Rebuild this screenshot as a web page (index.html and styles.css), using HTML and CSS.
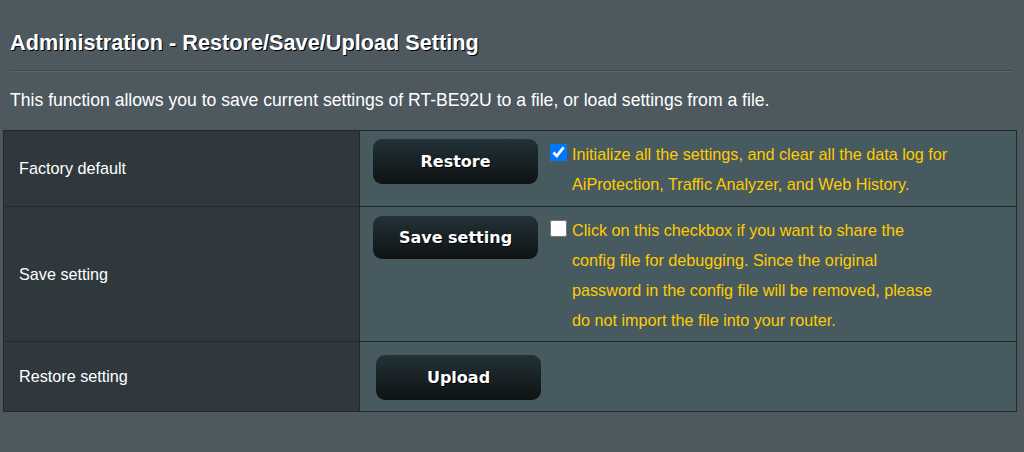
FILE: index.html
```html
<!DOCTYPE html>
<html>
<head>
<meta charset="utf-8">
<link rel="stylesheet" href="styles.css">
</head>
<body>
<div class="page">
  <div class="title">Administration - Restore/Save/Upload Setting</div>
  <div class="rule"></div>
  <div class="desc">This function allows you to save current settings of RT-BE92U to a file, or load settings from a file.</div>
  <table class="form">
    <tr class="r1">
      <th>Factory default</th>
      <td>
        <div class="cell">
          <button class="btn">Restore</button>
          <label class="opt"><input type="checkbox" checked class="chk"><span class="note">Initialize all the settings, and clear all the data log for<br>AiProtection, Traffic Analyzer, and Web History.</span></label>
        </div>
      </td>
    </tr>
    <tr class="r2">
      <th>Save setting</th>
      <td>
        <div class="cell">
          <button class="btn">Save setting</button>
          <label class="opt"><input type="checkbox" class="chk"><span class="note">Click on this checkbox if you want to share the<br>config file for debugging. Since the original<br>password in the config file will be removed, please<br>do not import the file into your router.</span></label>
        </div>
      </td>
    </tr>
    <tr class="r3">
      <th>Restore setting</th>
      <td class="up">
        <button class="btn">Upload</button>
      </td>
    </tr>
  </table>
</div>
</body>
</html>
```

FILE: styles.css
```css
html, body {
  margin: 0;
  padding: 0;
  background: #4d595f;
  height: 100%;
}
body {
  font-family: "Liberation Sans", Arial, sans-serif;
  color: #fff;
  overflow: hidden;
}
.page {
  padding-top: 30px;
}
.title {
  margin-left: 10px;
  font-size: 21.7px;
  font-weight: bold;
  line-height: 25px;
  text-shadow: 1px 1px 0 #000;
}
.rule {
  margin: 15px 11px 0 10px;
  height: 0;
  border-top: 1px solid #3c474c;
  border-bottom: 1px solid #5a666b;
}
.desc {
  margin: 18px 0 0 10px;
  font-size: 17.6px;
  line-height: 21px;
}
.form {
  margin: 19px 0 0 3px;
  width: 1014px;
  border-collapse: collapse;
  border: 1px solid #22292c;
}
.form th, .form td {
  border: 1px solid #22292c;
  padding: 0;
}
.form th {
  width: 340px;
  background: #2f393d;
  text-align: left;
  font-weight: normal;
  font-size: 16.2px;
  padding-left: 15px;
  vertical-align: middle;
}
.form td {
  background: #475a5f;
  vertical-align: top;
  padding: 8px 10px 6px 13px;
}
.r1 td {
  padding-bottom: 7px;
}
.cell {
  display: flex;
  align-items: flex-start;
}
.btn {
  width: 165px;
  height: 45px;
  border: 0;
  border-radius: 9px;
  background: linear-gradient(#233237, #0e1213);
  color: #fff;
  font-family: "DejaVu Sans", Verdana, sans-serif;
  font-weight: bold;
  font-size: 16px;
  text-shadow: 1px 1px 0 #000;
  padding: 0;
  flex: none;
}
.r2 .btn {
  height: 43px;
  margin-top: 1px;
}
.opt {
  display: flex;
  align-items: flex-start;
  margin-left: 12px;
}
.chk {
  width: 17px;
  height: 17px;
  margin: 5px 5px 0 0;
  accent-color: #0075ff;
  flex: none;
}
.note {
  color: #ffcc00;
  font-size: 16.2px;
  line-height: 30px;
}
.form td.up {
  vertical-align: middle;
  padding: 13px 10px 11px 16px;
}
```
